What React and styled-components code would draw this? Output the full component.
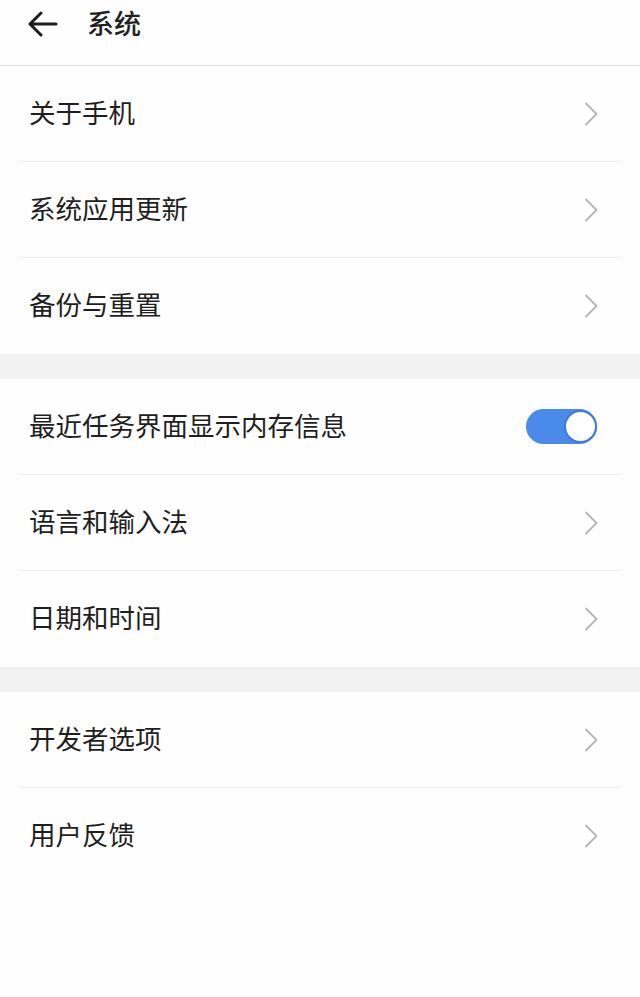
import React from 'react'
import styled, { createGlobalStyle } from 'styled-components'

const GlobalStyle = createGlobalStyle`
  html, body {
    margin: 0;
    padding: 0;
    background: #fefefe;
  }
  body {
    font-family: "Noto Sans CJK SC", "Noto Sans", sans-serif;
    color: #1f1f1f;
  }
`

const sections = [
  [
    { label: '关于手机' },
    { label: '系统应用更新' },
    { label: '备份与重置' },
  ],
  [
    { label: '最近任务界面显示内存信息', toggle: true },
    { label: '语言和输入法' },
    { label: '日期和时间' },
  ],
  [
    { label: '开发者选项' },
    { label: '用户反馈' },
  ],
]

export default function App() {
  return (
    <Page>
      <GlobalStyle />
      <Header>
        <BackIcon />
        <Title>系统</Title>
      </Header>
      {sections.map((items, i) => (
        <React.Fragment key={i}>
          {i > 0 && <Gap />}
          <Section>
            {items.map((item, j) => (
              <Row key={item.label} last={j === items.length - 1}>
                <Label>{item.label}</Label>
                {item.toggle ? (
                  <Switch on>
                    <Knob />
                  </Switch>
                ) : (
                  <Chevron />
                )}
              </Row>
            ))}
          </Section>
        </React.Fragment>
      ))}
    </Page>
  )
}

const BackIcon = () => (
  <BackSvg viewBox="0 0 30 26" width="30" height="26">
    <path
      d="M28 13 H3 M13 2 L2 13 L13 24"
      fill="none"
      stroke="#1c1c1c"
      strokeWidth="3"
      strokeLinecap="round"
      strokeLinejoin="round"
    />
  </BackSvg>
)

const Chevron = () => (
  <ChevronSvg viewBox="0 0 14 24" width="14" height="24">
    <path
      d="M2 1.5 L12.5 12 L2 22.5"
      fill="none"
      stroke="#b5b5b5"
      strokeWidth="1.8"
      strokeLinecap="round"
      strokeLinejoin="round"
    />
  </ChevronSvg>
)

const Page = styled.div`
  width: 640px;
  min-height: 997px;
  background: #fefefe;
`

const Header = styled.div`
  height: 66px;
  display: flex;
  align-items: center;
  padding: 0 0 0 28px;
  box-sizing: border-box;
  border-bottom: 1px solid #dcdcdc;
`

const BackSvg = styled.svg`
  display: block;
  margin-top: -18px;
`

const Title = styled.div`
  margin-left: 29px;
  margin-top: -20px;
  font-size: 27px;
  font-weight: 500;
  color: #222;
`

const Gap = styled.div`
  height: 25px;
  background: #f2f2f2;
`

const Section = styled.div`
  background: #fefefe;
`

const Row = styled.div`
  height: 96px;
  margin: 0 19px;
  padding: 0 24px 0 10px;
  box-sizing: border-box;
  display: flex;
  align-items: center;
  justify-content: space-between;
  border-bottom: 1px solid ${props => (props.last ? 'transparent' : '#ededed')};
`

const Label = styled.div`
  font-size: 26.5px;
  line-height: 1;
  color: #1f1f1f;
  margin-top: -2px;
`

const ChevronSvg = styled.svg`
  display: block;
  margin-right: -1px;
`

const Switch = styled.div`
  width: 71px;
  height: 35px;
  border-radius: 18px;
  background: ${props => (props.on ? '#4a8ae8' : '#cccccc')};
  display: flex;
  align-items: center;
  justify-content: ${props => (props.on ? 'flex-end' : 'flex-start')};
  box-sizing: border-box;
`

const Knob = styled.div`
  width: 33px;
  height: 33px;
  border-radius: 50%;
  background: #ffffff;
  border: 2px solid #3f7ad6;
  box-sizing: border-box;
`
